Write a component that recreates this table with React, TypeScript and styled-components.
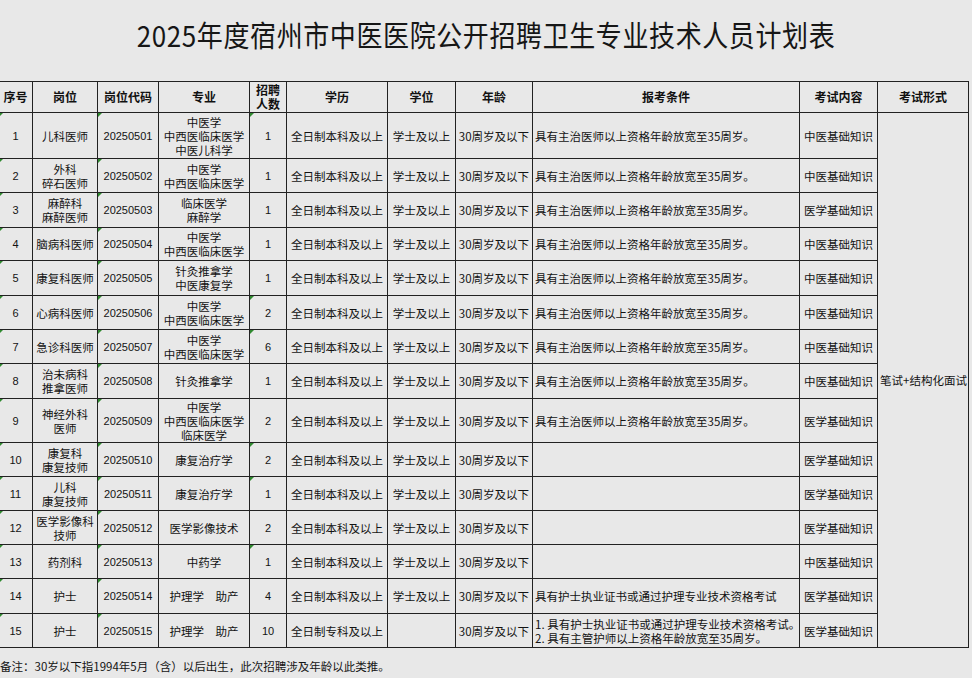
import React from "react";
import styled, { createGlobalStyle } from "styled-components";

const Global = createGlobalStyle`
  html, body { margin: 0; padding: 0; background: #e8e8e8; }
  body { font-family: "Noto Sans CJK SC", "Liberation Sans", sans-serif; color: #111; }
`;

const Page = styled.div`
  width: 972px;
  height: 678px;
  overflow: hidden;
  background: #e8e8e8;
`;

const Title = styled.div`
  height: 81px;
  display: flex;
  align-items: center;
  justify-content: center;
  padding-bottom: 12px;
  box-sizing: border-box;
`;

const TitleText = styled.h1`
  margin: 0;
  font-family: "Noto Sans CJK SC", sans-serif;
  font-weight: 400;
  font-size: 26px;
  line-height: 30px;
  letter-spacing: 0.6px;
  color: #161616;
  transform: scaleY(1.12);
`;

const Table = styled.table`
  border-collapse: collapse;
  table-layout: fixed;
  width: 970px;
  margin-left: -2px;
  font-size: 11.5px;
  line-height: 14px;
`;

const Row = styled.tr<{ $h: number }>`
  height: ${(p) => p.$h}px;
`;

const HeadCell = styled.th`
  border: 1.5px solid #222;
  font-weight: 700;
  font-size: 12px;
  line-height: 14px;
  text-align: center;
  vertical-align: middle;
  padding: 0 1px;
  color: #111;
`;

const Cell = styled.td<{ $align?: "left" | "center"; $num?: boolean }>`
  position: relative;
  border: 1.5px solid #222;
  text-align: ${(p) => p.$align ?? "center"};
  vertical-align: middle;
  padding: 0 2px;
  white-space: nowrap;
  font-family: ${(p) =>
    p.$num ? `"Liberation Sans", "Noto Sans CJK SC", sans-serif` : `"Noto Sans CJK SC", sans-serif`};
  font-size: ${(p) => (p.$num ? "11px" : "11.5px")};
  color: #131313;
`;

const Marker = styled.span`
  position: absolute;
  left: 0;
  top: 0;
  width: 0;
  height: 0;
  border-top: 4px solid #2f8a2f;
  border-right: 4px solid transparent;
`;

const Note = styled.div`
  margin-top: 11px;
  font-size: 11.5px;
  line-height: 14px;
  color: #151515;
`;

type R = {
  no: string;
  post: string[];
  code: string;
  major: string[];
  count: string;
  edu: string;
  degree: string;
  age: string;
  cond: string[];
  exam: string;
  h: number;
  mk: boolean;
};

const C1 = "具有主治医师以上资格年龄放宽至35周岁。";
const BK = "全日制本科及以上";
const XS = "学士及以上";
const AG = "30周岁及以下";

const rows: R[] = [
  { no: "1", post: ["儿科医师"], code: "20250501", major: ["中医学", "中西医临床医学", "中医儿科学"], count: "1", edu: BK, degree: XS, age: AG, cond: [C1], exam: "中医基础知识", h: 46, mk: true },
  { no: "2", post: ["外科", "碎石医师"], code: "20250502", major: ["中医学", "中西医临床医学"], count: "1", edu: BK, degree: XS, age: AG, cond: [C1], exam: "中医基础知识", h: 34, mk: false },
  { no: "3", post: ["麻醉科", "麻醉医师"], code: "20250503", major: ["临床医学", "麻醉学"], count: "1", edu: BK, degree: XS, age: AG, cond: [C1], exam: "医学基础知识", h: 35, mk: false },
  { no: "4", post: ["脑病科医师"], code: "20250504", major: ["中医学", "中西医临床医学"], count: "1", edu: BK, degree: XS, age: AG, cond: [C1], exam: "中医基础知识", h: 33, mk: false },
  { no: "5", post: ["康复科医师"], code: "20250505", major: ["针灸推拿学", "中医康复学"], count: "1", edu: BK, degree: XS, age: AG, cond: [C1], exam: "中医基础知识", h: 35, mk: false },
  { no: "6", post: ["心病科医师"], code: "20250506", major: ["中医学", "中西医临床医学"], count: "2", edu: BK, degree: XS, age: AG, cond: [C1], exam: "中医基础知识", h: 34, mk: true },
  { no: "7", post: ["急诊科医师"], code: "20250507", major: ["中医学", "中西医临床医学"], count: "6", edu: BK, degree: XS, age: AG, cond: [C1], exam: "中医基础知识", h: 34, mk: true },
  { no: "8", post: ["治未病科", "推拿医师"], code: "20250508", major: ["针灸推拿学"], count: "1", edu: BK, degree: XS, age: AG, cond: [C1], exam: "中医基础知识", h: 35, mk: false },
  { no: "9", post: ["神经外科", "医师"], code: "20250509", major: ["中医学", "中西医临床医学", "临床医学"], count: "2", edu: BK, degree: XS, age: AG, cond: [C1], exam: "医学基础知识", h: 44, mk: false },
  { no: "10", post: ["康复科", "康复技师"], code: "20250510", major: ["康复治疗学"], count: "2", edu: BK, degree: XS, age: AG, cond: [], exam: "医学基础知识", h: 34, mk: true },
  { no: "11", post: ["儿科", "康复技师"], code: "20250511", major: ["康复治疗学"], count: "1", edu: BK, degree: XS, age: AG, cond: [], exam: "医学基础知识", h: 34, mk: true },
  { no: "12", post: ["医学影像科", "技师"], code: "20250512", major: ["医学影像技术"], count: "2", edu: BK, degree: XS, age: AG, cond: [], exam: "医学基础知识", h: 34, mk: false },
  { no: "13", post: ["药剂科"], code: "20250513", major: ["中药学"], count: "1", edu: BK, degree: XS, age: AG, cond: [], exam: "中医基础知识", h: 34, mk: true },
  { no: "14", post: ["护士"], code: "20250514", major: ["护理学　助产"], count: "4", edu: BK, degree: XS, age: AG, cond: ["具有护士执业证书或通过护理专业技术资格考试"], exam: "医学基础知识", h: 35, mk: false },
  { no: "15", post: ["护士"], code: "20250515", major: ["护理学　助产"], count: "10", edu: "全日制专科及以上", degree: "", age: AG, cond: ["1. 具有护士执业证书或通过护理专业技术资格考试。", "2. 具有主管护师以上资格年龄放宽至35周岁。"], exam: "医学基础知识", h: 34, mk: false },
];

const widths = [34, 65, 61, 91, 37, 101, 68, 77, 267, 78, 91];

const Lines = ({ items }: { items: string[] }) => (
  <>
    {items.map((t, i) => (
      <React.Fragment key={i}>
        {i > 0 && <br />}
        {t}
      </React.Fragment>
    ))}
  </>
);

export default function App() {
  return (
    <Page>
      <Global />
      <Title>
        <TitleText>2025年度宿州市中医医院公开招聘卫生专业技术人员计划表</TitleText>
      </Title>
      <Table>
        <colgroup>
          {widths.map((w, i) => (
            <col key={i} style={{ width: w }} />
          ))}
        </colgroup>
        <thead>
          <Row $h={31}>
            <HeadCell>序号</HeadCell>
            <HeadCell>岗位</HeadCell>
            <HeadCell>岗位代码</HeadCell>
            <HeadCell>专业</HeadCell>
            <HeadCell>
              招聘
              <br />
              人数
            </HeadCell>
            <HeadCell>学历</HeadCell>
            <HeadCell>学位</HeadCell>
            <HeadCell>年龄</HeadCell>
            <HeadCell>报考条件</HeadCell>
            <HeadCell>考试内容</HeadCell>
            <HeadCell>考试形式</HeadCell>
          </Row>
        </thead>
        <tbody>
          {rows.map((r, i) => (
            <Row $h={r.h} key={r.no}>
              <Cell $num>
                <Marker />
                {r.no}
              </Cell>
              <Cell>
                <Lines items={r.post} />
              </Cell>
              <Cell $num>
                <Marker />
                {r.code}
              </Cell>
              <Cell>
                <Lines items={r.major} />
              </Cell>
              <Cell $num>
                {r.mk && <Marker />}
                {r.count}
              </Cell>
              <Cell>{r.edu}</Cell>
              <Cell>{r.degree}</Cell>
              <Cell>{r.age}</Cell>
              <Cell $align="left">
                <Lines items={r.cond} />
              </Cell>
              <Cell>{r.exam}</Cell>
              {i === 0 && (
                <Cell rowSpan={rows.length} $align="left">
                  笔试+结构化面试
                </Cell>
              )}
            </Row>
          ))}
        </tbody>
      </Table>
      <Note>备注：30岁以下指1994年5月（含）以后出生，此次招聘涉及年龄以此类推。</Note>
    </Page>
  );
}
